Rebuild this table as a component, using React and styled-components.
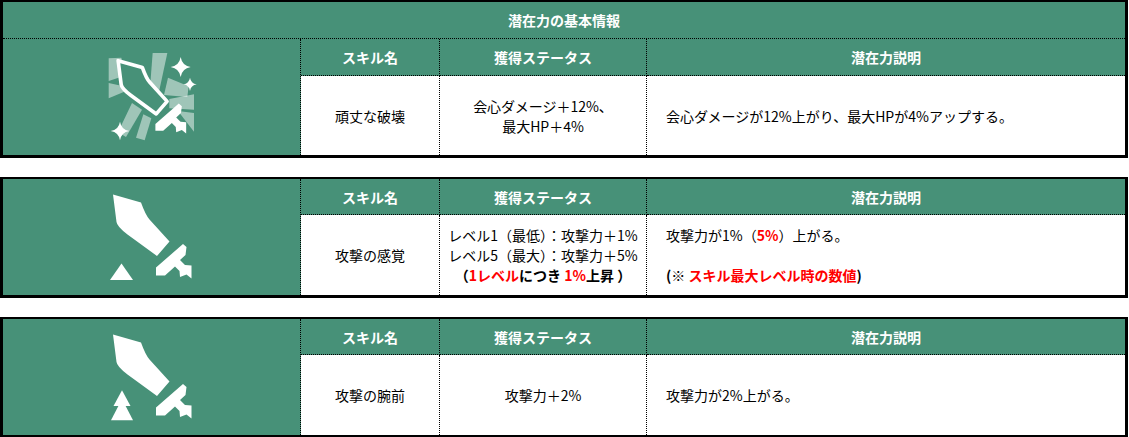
import React from "react";
import styled, { createGlobalStyle } from "styled-components";

// 色・線
const GREEN = "#479178";
const DOT = "1px dotted #000";

const GlobalStyle = createGlobalStyle`
  body {
    margin: 0;
    background: #fff;
    font-family: "Noto Sans CJK JP", "Noto Sans", sans-serif;
    color: #000;
  }
`;

// 剣のパス（アイコン2・3と同じ座標系）
const BLADE =
  "M13,5.5 L41,13.5 Q45.5,26 49.5,30.5 L69.5,52.5 L57,67 L27.5,45.5 Q17,37.5 16.5,33 Z";
const HILT =
  "M56,78.5 L83,55 L86.5,58 L85.5,66 L80,71 L85,76 L91.5,76.5 L91.5,89.5 L86.5,85.5 L80,88 L79.5,82 L75,77.5 L65,86.5 L56,86.5 Z";

const sparkle = (cx, cy, r) => {
  const k = r * 0.14;
  return `M${cx},${cy - r} Q${cx + k},${cy - k} ${cx + r},${cy} Q${cx + k},${cy + k} ${cx},${cy + r} Q${cx - k},${cy + k} ${cx - r},${cy} Q${cx - k},${cy - k} ${cx},${cy - r} Z`;
};

// 放射状の光
const RAYS = [
  "M14,22 L52,20 L62,74 L14,90 Z",
  "M14,96 L86,112 L14,142 Z",
  "M84,156 L114,176 L66,258 L42,244 Z",
  "M118,190 L142,202 L122,268 L96,260 Z",
  "M146,6 L190,6 L166,118 L138,110 Z",
  "M192,80 L254,106 L250,138 L180,132 Z",
  "M196,144 L270,130 L270,176 L196,172 Z",
  "M222,180 L270,186 L270,242 Z",
];

const BurstIcon = () => (
  <svg width="95" height="92" viewBox="0 0 285 276">
    {RAYS.map((d, i) => (
      <path key={i} d={d} fill="rgba(255,255,255,0.48)" />
    ))}
    <g transform="translate(45,32) scale(2.6) translate(-14,-6.7)">
      <path d={BLADE} fill={GREEN} stroke="#fff" strokeWidth="4.2" strokeLinejoin="round" />
      <path d={HILT} fill="#fff" />
    </g>
    <path d={sparkle(230, 48, 30)} fill="#fff" />
    <path d={sparkle(258, 100, 20)} fill="#fff" />
    <path d={sparkle(48, 240, 28)} fill="#fff" />
  </svg>
);

const SwordIcon = ({ double }) => (
  <svg width="100" height="100" viewBox="2 -2 100 100">
    <path d={BLADE} fill="#fff" />
    <path d={HILT} fill="#fff" />
    {double ? (
      <>
        <path d="M22,70 L33,91.3 L11,91.3 Z" fill="#fff" />
        <path d="M22,61.3 L30.5,77 L13.5,77 Z" fill="#fff" />
      </>
    ) : (
      <path d="M21.5,74.5 L33,91 L10,91 Z" fill="#fff" />
    )}
  </svg>
);

const Page = styled.div`
  width: 1128px;
  display: flex;
  flex-direction: column;
  gap: 19px;
`;

const Table = styled.div`
  display: grid;
  grid-template-columns: 298px 139px 207px 1fr;
  grid-template-rows: ${(p) => (p.$titled ? "37px 37px 79px" : "36px 80px")};
  border: 3px solid #000;
  border-top-width: 2px;
  background: #fff;
`;

const Title = styled.div`
  grid-column: 1 / -1;
  box-sizing: border-box;
  background: ${GREEN};
  border-bottom: ${DOT};
  color: #fff;
  font-size: 14px;
  font-weight: bold;
  display: flex;
  align-items: center;
  justify-content: center;
`;

const IconCell = styled.div`
  grid-row: span 2;
  box-sizing: border-box;
  background: ${GREEN};
  border-right: ${DOT};
  display: flex;
  align-items: center;
  justify-content: center;
`;

const Head = styled.div`
  box-sizing: border-box;
  background: ${GREEN};
  border-bottom: ${DOT};
  border-right: ${(p) => (p.$last ? "none" : DOT)};
  color: #fff;
  font-size: 14px;
  font-weight: bold;
  display: flex;
  align-items: center;
  justify-content: center;
`;

const Cell = styled.div`
  box-sizing: border-box;
  border-right: ${(p) => (p.$last ? "none" : DOT)};
  padding-left: ${(p) => (p.$left ? "19px" : "0")};
  font-size: 14px;
  line-height: 20px;
  display: flex;
  flex-direction: column;
  justify-content: center;
  align-items: ${(p) => (p.$left ? "flex-start" : "center")};
  text-align: ${(p) => (p.$left ? "left" : "center")};
  white-space: nowrap;
`;

const Line = styled.div`
  font-weight: ${(p) => (p.$bold ? "bold" : "normal")};
  min-height: 20px;
`;

const Red = styled.span`
  color: #ff0000;
  font-weight: bold;
`;

const SkillTable = ({ titled, icon, name, status, desc }) => (
  <Table $titled={titled}>
    {titled && <Title>潜在力の基本情報</Title>}
    <IconCell>{icon}</IconCell>
    <Head>スキル名</Head>
    <Head>獲得ステータス</Head>
    <Head $last>潜在力説明</Head>
    <Cell>{name}</Cell>
    <Cell>{status}</Cell>
    <Cell $left $last>
      {desc}
    </Cell>
  </Table>
);

const App = () => (
  <>
    <GlobalStyle />
    <Page>
      <SkillTable
        titled
        icon={<BurstIcon />}
        name="頑丈な破壊"
        status={
          <>
            <Line>会心ダメージ＋12%、</Line>
            <Line>最大HP＋4%</Line>
          </>
        }
        desc={<Line>会心ダメージが12%上がり、最大HPが4%アップする。</Line>}
      />
      <SkillTable
        icon={<SwordIcon />}
        name="攻撃の感覚"
        status={
          <>
            <Line>レベル1（最低）：攻撃力＋1%</Line>
            <Line>レベル5（最大）：攻撃力＋5%</Line>
            <Line $bold>
              （<Red>1レベル</Red>につき <Red>1%</Red>上昇 ）
            </Line>
          </>
        }
        desc={
          <>
            <Line>
              攻撃力が1%（<Red>5%</Red>）上がる。
            </Line>
            <Line />
            <Line $bold>
              (※ <Red>スキル最大レベル時の数値</Red>)
            </Line>
          </>
        }
      />
      <SkillTable
        icon={<SwordIcon double />}
        name="攻撃の腕前"
        status={<Line>攻撃力＋2%</Line>}
        desc={<Line>攻撃力が2%上がる。</Line>}
      />
    </Page>
  </>
);

export default App;
